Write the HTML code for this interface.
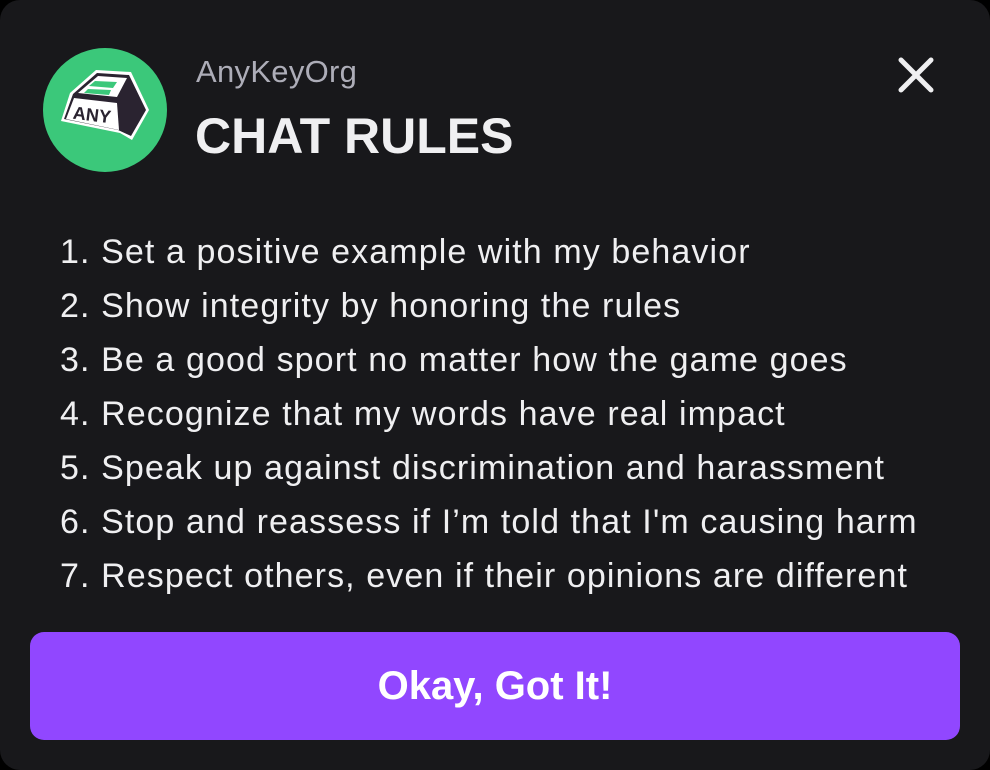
<!DOCTYPE html>
<html><head><style>
html,body{margin:0;padding:0;background:#000;}
.card{position:absolute;left:0;top:0;width:990px;height:770px;background:#18181b;border-radius:20px;font-family:"Liberation Sans",sans-serif;color:#efeff1;overflow:hidden}
.org{position:absolute;left:196px;top:54px;font-size:31px;color:#adadb8;letter-spacing:0.3px}
.title{position:absolute;left:195px;top:107px;font-size:50px;font-weight:bold;color:#efeff1}
.list{position:absolute;left:60px;top:225px;font-size:34px;line-height:54px;color:#efeff1;letter-spacing:1.1px;white-space:nowrap}
.btn{position:absolute;left:30px;top:632px;width:930px;height:108px;background:#9147ff;border-radius:14px;color:#fff;font-size:40px;font-weight:bold;text-align:center;line-height:108px}
</style></head><body>
<div class="card">
<svg style="position:absolute;left:0;top:0" width="200" height="200">
<circle cx="105" cy="110" r="62" fill="#3bc87a"/>
<polygon points="70,93 96,70 131,72 149,110 132,140 120,133 61,121" fill="#fff"/>
<polygon points="73,94 97,73 129,75 146,110 131,136 118,130 64,119" fill="#2a2330"/>
<polygon points="78,93 98,76 127,78 117,97" fill="#fff"/>
<polygon points="89,86 95,81 117,82 113,88" fill="#3bc87a"/>
<polygon points="84,93 88,89 111,90 109,95" fill="#3bc87a"/>
<polygon points="74,98 117,103 119,130 66,119" fill="#fff"/>
<text x="92" y="121" font-family="Liberation Sans" font-weight="bold" font-size="18" fill="#2a2330" text-anchor="middle" transform="rotate(7 92 115)">ANY</text>
</svg>
<div class="org">AnyKeyOrg</div>
<div class="title">CHAT RULES</div>
<svg style="position:absolute;left:898px;top:57px" width="36" height="36"><path d="M3 3L33 33M33 3L3 33" stroke="#efeff1" stroke-width="5" stroke-linecap="round"/></svg>
<div class="list">
1. Set a positive example with my behavior<br>
2. Show integrity by honoring the rules<br>
3. Be a good sport no matter how the game goes<br>
4. Recognize that my words have real impact<br>
5. Speak up against discrimination and harassment<br>
6. Stop and reassess if I’m told that I'm causing harm<br>
7. Respect others, even if their opinions are different
</div>
<div class="btn">Okay, Got It!</div>
</div>
</body></html>
